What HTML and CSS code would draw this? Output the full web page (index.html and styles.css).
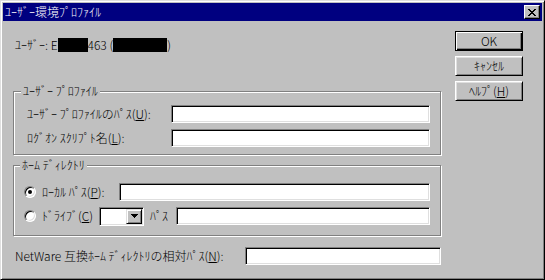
FILE: index.html
```html
<!DOCTYPE html>
<html>
<head>
    <meta charset="utf-8">
    <link rel="stylesheet" href="styles.css">
    <title>ユーザー環境プロファイル</title>
</head>
<body>
<div class="window">
    <div class="titlebar">
        <span class="title">ﾕｰｻﾞｰ環境ﾌﾟﾛﾌｧｲﾙ</span>
        <span class="close-btn">
            <svg width="8" height="7" viewBox="0 0 8 7">
                <path d="M0 0h2v1H0z M6 0h2v1H6z M1 1h2v1H1z M5 1h2v1H5z M2 2h4v1H2z M3 3h2v1H3z M2 4h4v1H2z M1 5h2v1H1z M5 5h2v1H5z M0 6h2v1H0z M6 6h2v1H6z" fill="#000"/>
            </svg>
        </span>
    </div>

    <div class="dialog">
        <div class="main">
            <div class="user-line">ﾕｰｻﾞｰ: E<span class="redact redact-id"></span>463 (<span class="redact redact-name"></span>)</div>

            <fieldset class="group group-profile">
                <legend>ﾕｰｻﾞｰ ﾌﾟﾛﾌｧｲﾙ</legend>
                <div class="group-body form-grid">
                    <label>ﾕｰｻﾞｰ ﾌﾟﾛﾌｧｲﾙのﾊﾟｽ(<u>U</u>):</label>
                    <span class="edit"></span>
                    <label>ﾛｸﾞｵﾝ ｽｸﾘﾌﾟﾄ名(<u>L</u>):</label>
                    <span class="edit"></span>
                </div>
            </fieldset>

            <fieldset class="group group-home">
                <legend>ﾎｰﾑ ﾃﾞｨﾚｸﾄﾘ</legend>
                <div class="group-body">
                    <div class="radio-row">
                        <span class="radio checked"></span>
                        <label class="local-label">ﾛｰｶﾙ ﾊﾟｽ(<u>P</u>):</label>
                        <span class="edit grow"></span>
                    </div>
                    <div class="radio-row">
                        <span class="radio"></span>
                        <label class="drive-label">ﾄﾞﾗｲﾌﾞ(<u>C</u>)</label>
                        <span class="combo">
                            <span class="combo-btn">
                                <svg width="7" height="4" viewBox="0 0 7 4">
                                    <path d="M0 0h7v1H0z M1 1h5v1H1z M2 2h3v1H2z M3 3h1v1H3z" fill="#000"/>
                                </svg>
                            </span>
                        </span>
                        <label class="path-label">ﾊﾟｽ</label>
                        <span class="edit grow"></span>
                    </div>
                </div>
            </fieldset>

            <div class="netware-row">
                <label>NetWare 互換ﾎｰﾑ ﾃﾞｨﾚｸﾄﾘの相対ﾊﾟｽ(<u>N</u>):</label>
                <span class="edit grow"></span>
            </div>
        </div>

        <div class="buttons">
            <div class="btn btn-default">OK</div>
            <div class="btn">ｷｬﾝｾﾙ</div>
            <div class="btn">ﾍﾙﾌﾟ(<u>H</u>)</div>
        </div>
    </div>
</div>
</body>
</html>
```

FILE: styles.css
```css
body {
    margin: 0;
    background-color: #c0c0c0;
    font-family: "Noto Sans CJK JP", sans-serif;
    font-size: 12px;
    font-weight: 300;
    color: #000000;
}

.window {
    width: 545px;
    height: 280px;
    box-sizing: border-box;
    padding: 2px;
    background-color: #c0c0c0;
    border: 1px solid;
    border-color: #dfdfdf #000000 #000000 #dfdfdf;
    box-shadow: inset 1px 1px #ffffff, inset -1px -1px #808080;
}

.titlebar {
    height: 18px;
    padding: 0 2px;
    background-color: #000080;
    color: #ffffff;
    display: flex;
    align-items: center;
    justify-content: space-between;
}

.title {
    line-height: 14px;
}

.close-btn {
    width: 16px;
    height: 14px;
    box-sizing: border-box;
    background-color: #c0c0c0;
    border: 1px solid;
    border-color: #ffffff #000000 #000000 #ffffff;
    box-shadow: inset -1px -1px #808080;
    display: flex;
    align-items: center;
    justify-content: center;
}

.close-btn svg {
    display: block;
}

.dialog {
    display: flex;
    height: 256px;
}

.main {
    margin-left: 10px;
    width: 428px;
}

.user-line {
    margin-top: 17px;
    padding-left: 2px;
    height: 14px;
    line-height: 14px;
    display: flex;
    align-items: center;
    white-space: pre;
}

.redact {
    display: inline-block;
    height: 14px;
    background-color: #000000;
}

.redact-id {
    width: 30px;
}

.redact-name {
    width: 54px;
}

/* group boxes */
.group {
    margin: 0;
    padding: 0 10px 0 0;
    min-width: 0;
    border: 1px solid #808080;
    box-shadow: inset 1px 1px #ffffff, 1px 1px #ffffff;
}

.group legend {
    padding: 0 2px;
    line-height: 14px;
    background-color: #c0c0c0;
}

.group-profile {
    margin-top: 32px;
    padding-left: 7px;
}

.group-profile .group-body {
    padding: 7px 0 7px 6px;
}

.group-home {
    margin-top: 3px;
    padding-left: 6px;
}

.group-home .group-body {
    padding: 11px 0 10px 4px;
    display: flex;
    flex-direction: column;
    gap: 6px;
}

.form-grid {
    display: grid;
    grid-template-columns: 144px 1fr;
    grid-auto-rows: 18px;
    row-gap: 6px;
    align-items: center;
}

label {
    line-height: 14px;
    white-space: nowrap;
}

.edit {
    display: block;
    height: 18px;
    box-sizing: border-box;
    background-color: #ffffff;
    border: 1px solid;
    border-color: #808080 #ffffff #ffffff #808080;
    box-shadow: inset 1px 1px #000000, inset -1px -1px #dfdfdf;
}

.grow {
    flex: 1;
}

.radio-row {
    height: 18px;
    display: flex;
    align-items: center;
    gap: 6px;
}

.radio {
    width: 12px;
    height: 12px;
    box-sizing: border-box;
    border-radius: 50%;
    background-color: #ffffff;
    border: 1px solid;
    border-color: #808080 #ffffff #ffffff #808080;
    box-shadow: inset 1px 1px #000000, inset -1px -1px #dfdfdf;
    display: flex;
    align-items: center;
    justify-content: center;
}

.radio.checked::after {
    content: "";
    width: 4px;
    height: 4px;
    border-radius: 50%;
    background-color: #000000;
}

.local-label {
    width: 71px;
}

.drive-label {
    width: 51px;
}

.path-label {
    width: 20px;
}

.combo {
    width: 45px;
    height: 19px;
    box-sizing: border-box;
    padding: 1px;
    background-color: #ffffff;
    border: 1px solid;
    border-color: #808080 #ffffff #ffffff #808080;
    box-shadow: inset 1px 1px #000000, inset -1px -1px #dfdfdf;
    display: flex;
    justify-content: flex-end;
}

.combo-btn {
    width: 16px;
    height: 15px;
    box-sizing: border-box;
    background-color: #c0c0c0;
    border: 1px solid;
    border-color: #dfdfdf #000000 #000000 #dfdfdf;
    box-shadow: inset 1px 1px #ffffff, inset -1px -1px #808080;
    display: flex;
    align-items: center;
    justify-content: center;
}

.combo-btn svg {
    display: block;
}

.netware-row {
    margin-top: 11px;
    padding-left: 2px;
    height: 18px;
    display: flex;
    align-items: center;
}

.netware-row label {
    width: 230px;
}

/* buttons */
.buttons {
    margin-left: 14px;
    padding-top: 10px;
    display: flex;
    flex-direction: column;
    gap: 5px;
}

.btn {
    width: 68px;
    height: 20px;
    box-sizing: border-box;
    background-color: #c0c0c0;
    border: 1px solid;
    border-color: #ffffff #000000 #000000 #ffffff;
    box-shadow: inset 1px 1px #dfdfdf, inset -1px -1px #808080;
    display: flex;
    align-items: center;
    justify-content: center;
    line-height: 14px;
}

.btn-default {
    border-color: #000000;
    box-shadow: inset 1px 1px #ffffff, inset -1px -1px #000000, inset -2px -2px #808080;
}
```
